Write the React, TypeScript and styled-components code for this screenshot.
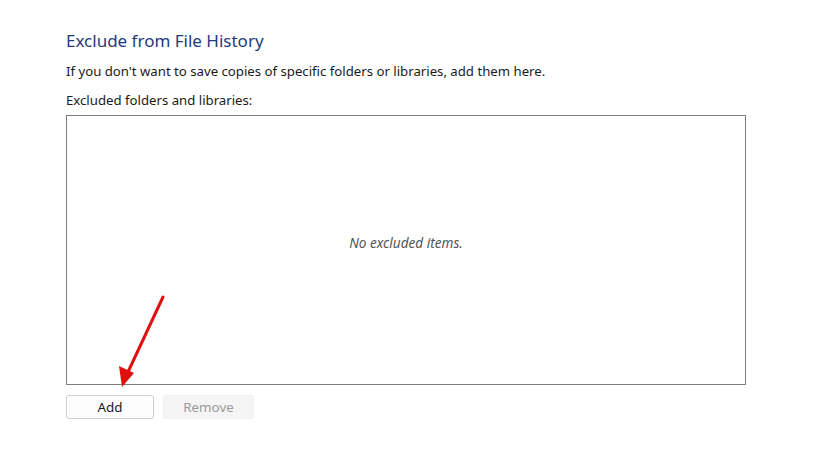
import React from "react";
import styled, { createGlobalStyle } from "styled-components";

const GlobalStyle = createGlobalStyle`
  html, body {
    margin: 0;
    padding: 0;
    background: #ffffff;
  }
  body {
    font-family: "Noto Sans", "Open Sans", sans-serif;
    color: #1a1a1a;
  }
`;

const Page = styled.div`
  position: relative;
  width: 825px;
  height: 465px;
  padding: 29px 0 0 66px;
  box-sizing: border-box;
`;

const Title = styled.h1`
  margin: 0;
  font-size: 17px;
  line-height: 24px;
  font-weight: 400;
  color: #1e3b7e;
`;

const Text = styled.p<{ $top: number }>`
  margin: ${(p) => p.$top}px 0 0 0;
  font-size: 13.2px;
  line-height: 18px;
  color: #1a1a1a;
`;

const ListBox = styled.div`
  margin-top: 6px;
  width: 680px;
  height: 270px;
  box-sizing: border-box;
  border: 1px solid #7d7d7d;
  display: flex;
  align-items: center;
  justify-content: center;
  padding-bottom: 15px;
`;

const Empty = styled.span`
  font-size: 13.6px;
  font-style: italic;
  color: #555555;
`;

const ButtonRow = styled.div`
  display: flex;
  gap: 9px;
  margin-top: 10px;
`;

const Button = styled.button<{ $disabled?: boolean }>`
  width: ${(p) => (p.$disabled ? 91 : 88)}px;
  height: 24px;
  box-sizing: border-box;
  border-radius: 3px;
  border: 1px solid ${(p) => (p.$disabled ? "#efefef" : "#cfcfcf")};
  background: ${(p) => (p.$disabled ? "#f5f5f5" : "#fdfdfd")};
  color: ${(p) => (p.$disabled ? "#9a9a9a" : "#1a1a1a")};
  font-family: "Noto Sans", "Open Sans", sans-serif;
  font-size: 13.4px;
  padding: 0;
`;

const Arrow = styled.svg`
  position: absolute;
  left: 0;
  top: 0;
  pointer-events: none;
`;

export default function App() {
  return (
    <>
      <GlobalStyle />
      <Page>
        <Title>Exclude from File History</Title>
        <Text $top={9}>
          If you don't want to save copies of specific folders or libraries, add them here.
        </Text>
        <Text $top={11}>Excluded folders and libraries:</Text>
        <ListBox>
          <Empty>No excluded items.</Empty>
        </ListBox>
        <ButtonRow>
          <Button>Add</Button>
          <Button $disabled disabled>
            Remove
          </Button>
        </ButtonRow>
        <Arrow width="825" height="465" viewBox="0 0 825 465">
          <line x1="163" y1="297" x2="128" y2="372" stroke="#e01010" strokeWidth="3" strokeLinecap="round" />
          <polygon points="122,387 119,366 134,373" fill="#e01010" />
        </Arrow>
      </Page>
    </>
  );
}
